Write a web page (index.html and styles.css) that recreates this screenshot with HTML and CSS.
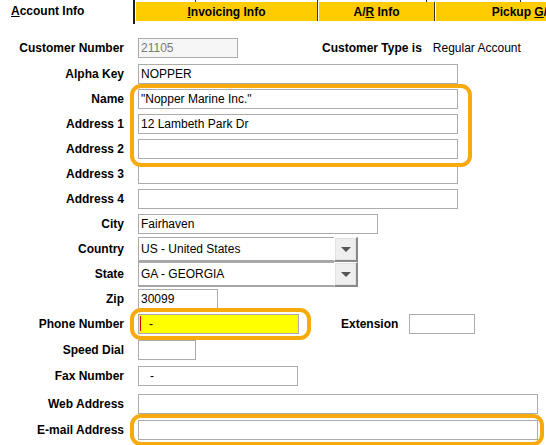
FILE: index.html
```html
<!DOCTYPE html>
<html>
<head>
<meta charset="utf-8">
<link rel="stylesheet" href="styles.css">
</head>
<body>
<div class="tabs">
  <div class="tab-active"><u>A</u>ccount Info</div>
  <div class="tabs-rest">
    <div class="marks"><span class="m1"></span><span class="m2"></span><span class="m3"></span><span class="m4"></span></div>
    <div class="tab-row">
      <div class="tab t-invoice"><u>I</u>nvoicing Info</div>
      <div class="tab t-ar">A/<u>R</u> Info</div>
      <div class="tab t-pickup">Pickup <u>G</u>/L</div>
    </div>
  </div>
</div>

<div class="form">
  <div class="row h26">
    <span class="lbl">Customer Number</span>
    <div class="field w100 disabled">21105</div>
    <span class="lbl-inline type-lbl">Customer Type is</span>
    <span class="value">Regular Account</span>
  </div>
  <div class="row h25">
    <span class="lbl">Alpha Key</span>
    <div class="field w320">NOPPER</div>
  </div>
  <div class="row h25">
    <span class="lbl">Name</span>
    <div class="field w320">"Nopper Marine Inc."</div>
  </div>
  <div class="row h25">
    <span class="lbl">Address 1</span>
    <div class="field w320">12 Lambeth Park Dr</div>
  </div>
  <div class="row h25">
    <span class="lbl">Address 2</span>
    <div class="field w320"></div>
  </div>
  <div class="row h25">
    <span class="lbl">Address 3</span>
    <div class="field w320"></div>
  </div>
  <div class="row h25">
    <span class="lbl">Address 4</span>
    <div class="field w320"></div>
  </div>
  <div class="row h23">
    <span class="lbl">City</span>
    <div class="field w240">Fairhaven</div>
  </div>
  <div class="row h25">
    <span class="lbl tall">Country</span>
    <div class="select">
      <div class="select-text">US - United States</div>
      <div class="select-btn"><span class="arrow"></span></div>
    </div>
  </div>
  <div class="row h27">
    <span class="lbl tall">State</span>
    <div class="select">
      <div class="select-text">GA - GEORGIA</div>
      <div class="select-btn"><span class="arrow"></span></div>
    </div>
  </div>
  <div class="row h25">
    <span class="lbl">Zip</span>
    <div class="field w80">30099</div>
  </div>
  <div class="row h26">
    <span class="lbl">Phone Number</span>
    <div class="field w161 phone"><span class="caret"></span>-</div>
    <span class="lbl-inline ext-lbl">Extension</span>
    <div class="field w66"></div>
  </div>
  <div class="row h26">
    <span class="lbl">Speed Dial</span>
    <div class="field w58"></div>
  </div>
  <div class="row h28">
    <span class="lbl">Fax Number</span>
    <div class="field w160 fax">-</div>
  </div>
  <div class="row h26">
    <span class="lbl">Web Address</span>
    <div class="field w400"></div>
  </div>
  <div class="row h25">
    <span class="lbl">E-mail Address</span>
    <div class="field w400"></div>
  </div>
</div>

<div class="hl hl-name"></div>
<div class="hl hl-phone"></div>
<div class="hl hl-email"></div>
</body>
</html>
```

FILE: styles.css
```css
html, body {
  margin: 0;
  padding: 0;
}
body {
  width: 546px;
  height: 445px;
  overflow: hidden;
  position: relative;
  background: #fff;
  color: #000;
  font-family: "Liberation Sans", Arial, sans-serif;
  font-size: 12px;
}

/* Tabs */
.tabs {
  display: flex;
  height: 24px;
  white-space: nowrap;
  overflow: hidden;
}
.tab-active {
  flex: none;
  width: 135px;
  height: 24px;
  box-sizing: border-box;
  padding-left: 11px;
  border-right: 2px solid #1e1e1e;
  font-weight: bold;
  line-height: 23px;
  background: #fff;
}
.tabs-rest {
  flex: 1;
  display: flex;
  flex-direction: column;
  min-width: 0;
}
.marks {
  height: 2px;
  display: flex;
}
.marks span {
  flex: none;
  height: 2px;
  border-right: 1px solid #333;
}
.marks .m1 { width: 60px; }
.marks .m2 { width: 121px; }
.marks .m3 { width: 108px; }
.marks .m4 { width: 93px; }
.tab-row {
  height: 19px;
  display: flex;
}
.tab {
  flex: none;
  box-sizing: border-box;
  background: #ffcc00;
  font-weight: bold;
  text-align: center;
  line-height: 20px;
  border-left: 1px solid #fff;
  border-right: 1px solid #333;
  height: 19px;
}
.t-invoice { width: 183px; }
.t-ar { width: 117px; }
.t-pickup { width: 175px; border-right: none; }

/* Form */
.form {
  margin-top: 14px;
}
.row {
  display: flex;
  align-items: flex-start;
  white-space: nowrap;
}
.h23 { height: 23px; }
.h25 { height: 25px; }
.h26 { height: 26px; }
.h27 { height: 27px; }
.h28 { height: 28px; }

.lbl {
  flex: none;
  width: 124px;
  margin-right: 14px;
  text-align: right;
  font-weight: bold;
  line-height: 20px;
}
.lbl.tall { line-height: 25px; }
.lbl-inline {
  flex: none;
  font-weight: bold;
  line-height: 20px;
}
.type-lbl { margin-left: 84px; }
.value {
  margin-left: 11px;
  line-height: 20px;
}
.ext-lbl { margin-left: 42px; margin-right: 11px; }

.field {
  flex: none;
  height: 20px;
  box-sizing: border-box;
  border: 1px solid #ababab;
  line-height: 18px;
  padding-left: 2px;
  overflow: hidden;
  background: #fff;
}
.w58 { width: 58px; }
.w66 { width: 66px; }
.w80 { width: 80px; }
.w100 { width: 100px; }
.w160 { width: 160px; }
.w161 { width: 161px; }
.w240 { width: 240px; }
.w320 { width: 320px; }
.w400 { width: 400px; }

.disabled {
  background: #f6f6f6;
  color: #7a7a7a;
}
.phone {
  background: #ffff00;
  padding-left: 1px;
}
.caret {
  display: inline-block;
  width: 1px;
  height: 15px;
  background: #e00000;
  vertical-align: -3px;
  margin-right: 8px;
}
.fax { padding-left: 11px; }

/* Select */
.select {
  flex: none;
  display: flex;
  width: 220px;
  height: 25px;
  box-sizing: border-box;
}
.select-text {
  flex: 1;
  box-sizing: border-box;
  border: 1px solid #ababab;
  border-bottom: 2px solid #a6a6a6;
  border-right: none;
  padding-left: 2px;
  line-height: 22px;
  background: #fff;
}
.select-btn {
  flex: none;
  width: 24px;
  height: 25px;
  box-sizing: border-box;
  background: #efefef;
  border-top: 1px solid #fff;
  border-left: 1px solid #fff;
  border-right: 2px solid #8a8a8a;
  border-bottom: 2px solid #8a8a8a;
  box-shadow: inset 0 0 0 1px #e2e2e2;
  display: flex;
  align-items: center;
  justify-content: center;
}
.arrow {
  width: 0;
  height: 0;
  border-left: 5px solid transparent;
  border-right: 5px solid transparent;
  border-top: 5px solid #555;
}

/* Highlight overlays */
.hl {
  position: absolute;
  box-sizing: border-box;
  border: 4px solid #f7aa0b;
  border-radius: 11px;
  pointer-events: none;
}
.hl-name { left: 130px; top: 84px; width: 342px; height: 83px; }
.hl-phone { left: 130px; top: 308px; width: 181px; height: 32px; }
.hl-email { left: 130px; top: 414px; width: 414px; height: 32px; }
```
